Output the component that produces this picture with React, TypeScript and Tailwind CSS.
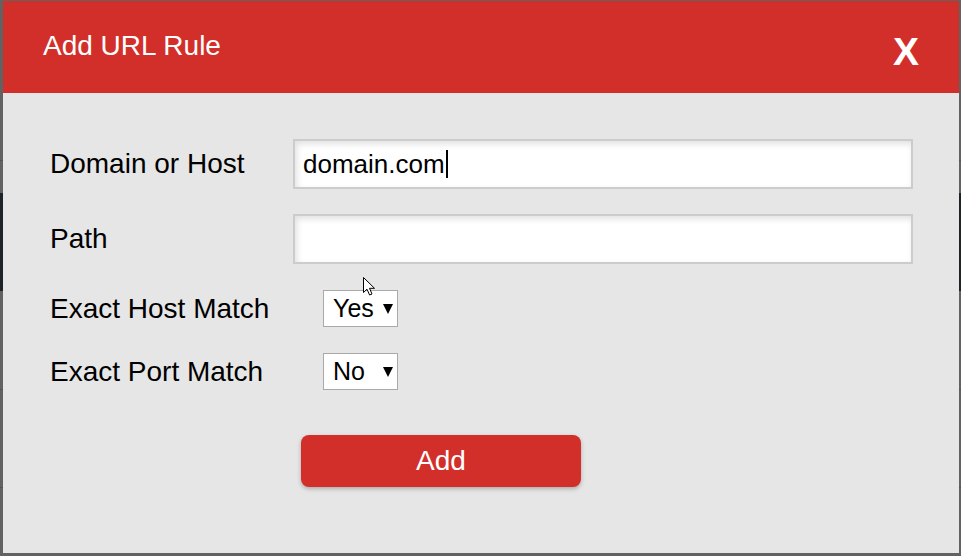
import React from "react";

const Field = ({ label, value }: { label: string; value?: string }) => {
  return (
    <div className="flex items-center h-[50px]">
      <label className="w-[243px] text-[28px] leading-none text-black">{label}</label>
      <div className="flex items-center w-[620px] h-[50px] bg-white border-2 border-[#cccccc] shadow-[inset_2px_3px_6px_rgba(0,0,0,0.12)] px-[8px] text-[26px] text-black">
        {value && (
          <>
            <span>{value}</span>
            <span className="inline-block w-[2px] h-[28px] bg-black ml-[1px]" />
          </>
        )}
      </div>
    </div>
  );
};

const Choice = ({ label, value }: { label: string; value: string }) => {
  return (
    <div className="flex items-center h-[37px]">
      <label className="w-[273px] text-[28px] leading-none text-black">{label}</label>
      <div className="flex items-center justify-between w-[75px] h-[37px] bg-white border border-[#a9a9a9] pl-[9px] pr-[4px] text-[25px] text-black">
        <span>{value}</span>
        <svg width="10" height="10" viewBox="0 0 10 10">
          <path d="M0 0H10L5 10Z" fill="black" />
        </svg>
      </div>
    </div>
  );
};

const App = () => {
  return (
    <div
      className="relative w-[961px] h-[556px] overflow-hidden bg-[#626262]"
      style={{ fontFamily: '"Liberation Sans", Arial, sans-serif' }}
    >
      {/* dimmed page behind the dialog */}
      <div className="flex flex-col w-full h-full">
        <div className="h-[160px]" />
        <div className="h-[1px] bg-[#545454]" />
        <div className="h-[32px]" />
        <div className="h-[98px] bg-[#1e2328]" />
        <div className="h-[98px]" />
        <div className="h-[1px] bg-[#545454]" />
        <div className="h-[97px]" />
        <div className="h-[1px] bg-[#545454]" />
      </div>

      <div className="absolute left-[3px] top-[1px] w-[956px] h-[552px] flex flex-col bg-[#e6e6e6]">
        <div className="flex items-center justify-between h-[92px] bg-[#d32f2a] pl-[40px] pr-[40px] text-white">
          <h2 className="text-[28px] leading-none -mt-[2px]">Add URL Rule</h2>
          <button className="text-[39px] font-bold leading-none mt-[8px]">X</button>
        </div>

        <div className="flex flex-col pl-[47px] pt-[46px]">
          <div className="flex flex-col gap-[25px]">
            <Field label="Domain or Host" value="domain.com" />
            <Field label="Path" />
          </div>
          <div className="flex flex-col gap-[26px] mt-[26px]">
            <Choice label="Exact Host Match" value="Yes" />
            <Choice label="Exact Port Match" value="No" />
          </div>
          <div className="mt-[45px] pl-[251px]">
            <button className="w-[280px] h-[52px] rounded-[8px] bg-[#d32f2a] text-white text-[28px] shadow-[0_2px_4px_rgba(0,0,0,0.25)]">
              Add
            </button>
          </div>
        </div>
      </div>

      {/* mouse pointer */}
      <svg className="absolute left-[363px] top-[277px]" width="13" height="19" viewBox="0 0 13 19">
        <path d="M0.5 0.5V15.5L4 12.2L6.6 18L9 17L6.5 11.3H11.5Z" fill="white" stroke="black" strokeWidth="1" strokeLinejoin="round" />
      </svg>
    </div>
  );
};

export default App;
